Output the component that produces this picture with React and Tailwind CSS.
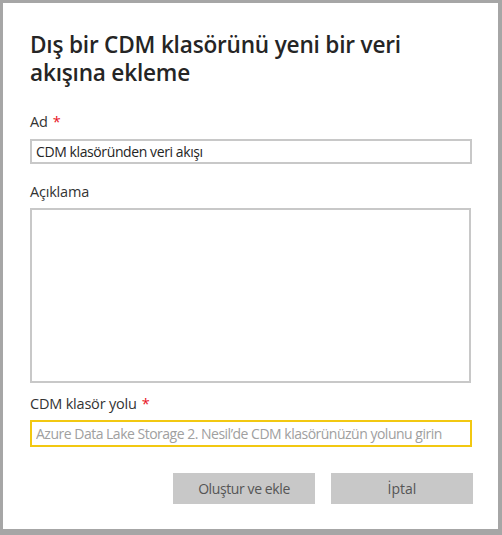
import { useState } from 'react';

/**
 * Field label with optional required marker
 */
function FieldLabel({ children, required }) {
  return (
    <div className="text-[14.5px] leading-[20px] text-[#333333] tracking-[-0.2px]">
      {children}
      {required && <span className="ml-[5px] text-[#e81123]">*</span>}
    </div>
  );
}

export default function App() {
  const [name, setName] = useState('CDM klasöründen veri akışı');
  const [description, setDescription] = useState('');
  const [path, setPath] = useState('');

  return (
    <div
      className="w-[502px] h-[535px] bg-white border-[#a6a6a6] border-t-[3px] border-l-[3px] border-r-[4px] border-b-[6px] flex flex-col pl-[27px] pr-[25px] pt-[28px]"
      style={{ fontFamily: '"Open Sans", "Noto Sans", sans-serif' }}
    >
      {/* Title */}
      <h1 className="text-[22.6px] leading-[28px] font-semibold text-[#252525] tracking-[-0.2px]">
        Dış bir CDM klasörünü yeni bir veri
        <br />
        akışına ekleme
      </h1>

      {/* Name */}
      <div className="mt-[25px]">
        <FieldLabel required>Ad</FieldLabel>
        <input
          type="text"
          value={name}
          onChange={(e) => setName(e.target.value)}
          className="mt-[7px] w-[442px] h-[25px] border-2 border-[#c8c8c8] px-[4px] text-[14px] tracking-[-0.4px] text-[#252525] outline-none"
        />
      </div>

      {/* Description */}
      <div className="mt-[18px]">
        <FieldLabel>Açıklama</FieldLabel>
        <textarea
          value={description}
          onChange={(e) => setDescription(e.target.value)}
          className="mt-[6px] block w-[441px] h-[175px] border-2 border-[#c8c8c8] resize-none outline-none"
        />
      </div>

      {/* CDM folder path */}
      <div className="mt-[11px]">
        <FieldLabel required>CDM klasör yolu</FieldLabel>
        <input
          type="text"
          value={path}
          onChange={(e) => setPath(e.target.value)}
          placeholder="Azure Data Lake Storage 2. Nesil’de CDM klasörünüzün yolunu girin"
          className="mt-[6px] w-[442px] h-[27px] border-2 border-[#f2c811] px-[4px] text-[14px] tracking-[-0.5px] text-[#252525] placeholder-[#a0a0a0] outline-none"
        />
      </div>

      {/* Actions */}
      <div className="mt-[26px] flex justify-end gap-[16px]">
        <button className="w-[142px] h-[31px] bg-[#c8c8c8] text-[14px] tracking-[-0.4px] text-[#555555]">
          Oluştur ve ekle
        </button>
        <button className="w-[142px] h-[31px] bg-[#c8c8c8] text-[14px] text-[#555555]">
          İptal
        </button>
      </div>
    </div>
  );
}
